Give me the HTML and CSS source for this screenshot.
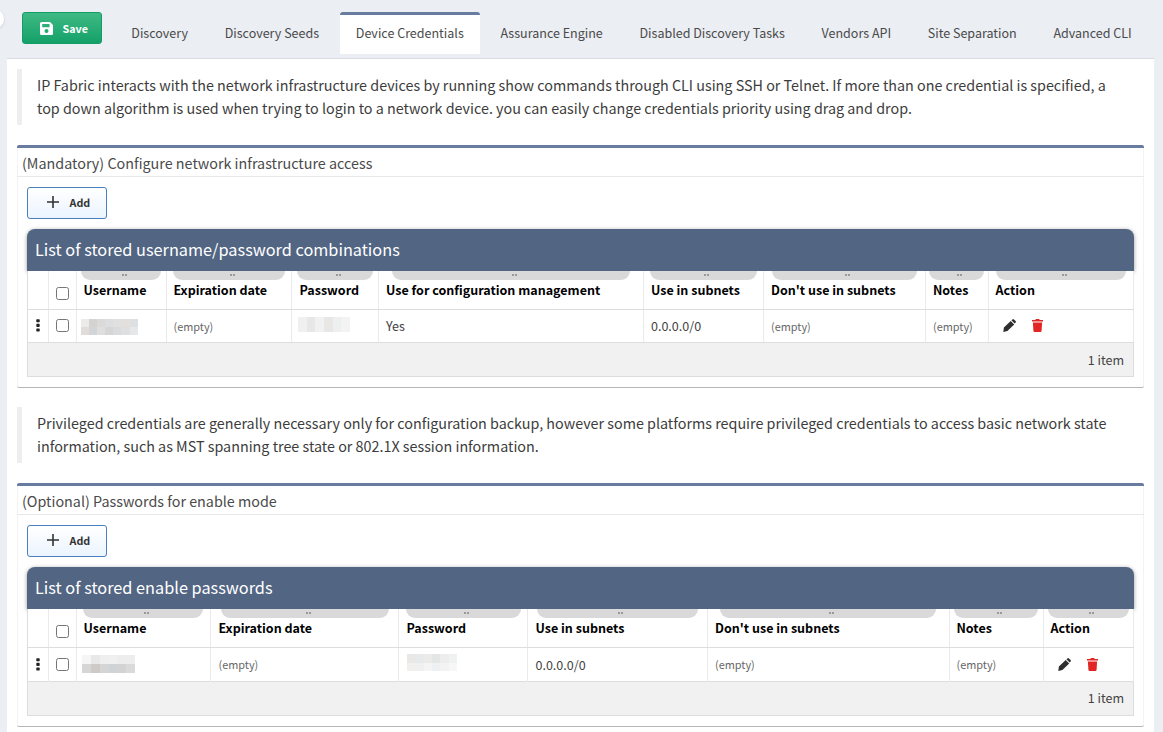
FILE: index.html
```
<!DOCTYPE html>
<html lang="en">
<head>
<meta charset="utf-8">
<title>Device Credentials</title>
<link rel="stylesheet" href="styles.css">
</head>
<body>
<svg class="defs" width="0" height="0">
  <symbol id="pencil" viewBox="0 0 13 13"><path d="M.9 8.600 7.700 1.900l3.500 3.500L4.400 12.100.3 12.900zM8.400 1.300 9.400.4q.8-.6 1.500 0l1.700 1.700q.6.7 0 1.500l-.9 1z"/></symbol>
  <symbol id="trash" viewBox="0 0 11 13"><path d="M0 1h3.200L4 .1h3l.8.9H11v1.600H0zM.9 3.400h9.200l-.5 8.300q-.1 1.200-1.200 1.200H2.600q-1.100 0-1.200-1.200z"/></symbol>
  <symbol id="grip" viewBox="0 0 4 13"><path d="M.8.2h2.400l.5.6v1.900l-.5.6H.8l-.5-.6V.8zM.8 4.800h2.400l.5.6v1.900l-.5.6H.8l-.5-.6V5.400zM.8 9.400h2.400l.5.6v1.900l-.5.6H.8l-.5-.6V10z"/></symbol>
  <symbol id="plus" viewBox="0 0 12 12"><path d="M5.200 0h1.600v5.200H12v1.600H6.800V12H5.200V6.800H0V5.200h5.200z"/></symbol>
</svg>
<div class="knob"></div>
<div class="page">
  <header class="toolbar">
    <button class="save"><svg width="13" height="13" viewBox="0 0 13 13"><path fill="#fff" fill-rule="evenodd" d="M1.500 0H10l3 3v8.500q0 1.500-1.500 1.500h-10Q0 13 0 11.500v-10Q0 0 1.500 0zM2.200 2v3.300h7.300V2zM6.500 7a2 2 0 1 0 0 4 2 2 0 0 0 0-4z"/></svg><span>Save</span></button>
    <nav class="tabs">
      <a class="tab">Discovery</a>
      <a class="tab">Discovery Seeds</a>
      <a class="tab active">Device Credentials</a>
      <a class="tab">Assurance Engine</a>
      <a class="tab">Disabled Discovery Tasks</a>
      <a class="tab">Vendors API</a>
      <a class="tab">Site Separation</a>
      <a class="tab">Advanced CLI</a>
    </nav>
  </header>
  <main class="content">
    <p class="note">IP Fabric interacts with the network infrastructure devices by running show commands through CLI using SSH or Telnet. If more than one credential is specified, a<br>top down algorithm is used when trying to login to a network device. you can easily change credentials priority using drag and drop.</p>
    <section class="card">
      <h2 class="card-title">(Mandatory) Configure network infrastructure access</h2>
      <button class="add"><svg width="12" height="12"><use href="#plus"/></svg><span>Add</span></button>
      <div class="list">
        <h3 class="list-title">List of stored username/password combinations</h3>
        <div class="row head access">
          <div></div>
          <div class="check"><input type="checkbox"></div>
          <div class="h1"><i></i><b>Username</b></div>
          <div class="h2"><i></i><b>Expiration date</b></div>
          <div class="h3"><i></i><b>Password</b></div>
          <div class="h4"><i></i><b>Use for configuration management</b></div>
          <div class="h5"><i></i><b>Use in subnets</b></div>
          <div class="h6"><i></i><b>Don't use in subnets</b></div>
          <div class="h7"><i></i><b>Notes</b></div>
          <div class="h8"><i></i><b>Action</b></div>
        </div>
        <div class="row data access">
          <div class="grip"><svg width="4" height="13"><use href="#grip"/></svg></div>
          <div class="check"><input type="checkbox"></div>
          <div class="h1"><svg class="mask mask-user" width="57" height="16" viewBox="0 0 57 16" shape-rendering="crispEdges"><path fill="#ecebea" d="M0 0h8v8H0z"/><path fill="#d5d3d2" d="M8 0h8v8H8z"/><path fill="#dbdad8" d="M16 0h8v8h-8z"/><path fill="#dcdee0" d="M24 0h8v8h-8z"/><path fill="#e0e0e0" d="M32 0h8v8h-8z"/><path fill="#e3dfdc" d="M40 0h9v8h-9z"/><path fill="#dde0e3" d="M49 0h8v8h-8z"/><path fill="#e1dcda" d="M0 8h8v8H0z"/><path fill="#d1d4d8" d="M8 8h8v8H8z"/><path fill="#dfdfdf" d="M16 8h8v8h-8z"/><path fill="#d6d6d6" d="M24 8h8v8h-8z"/><path fill="#dadbdb" d="M32 8h8v8h-8z"/><path fill="#dedfe0" d="M40 8h9v8h-9z"/><path fill="#e6e7e9" d="M49 8h8v8h-8z"/></svg></div>
          <div class="h2 empty">(empty)</div>
          <div class="h3"><svg class="mask mask-pass" width="52" height="15" viewBox="0 0 52 15" shape-rendering="crispEdges"><path fill="#f0f0f0" d="M0 0h9v15H0z"/><path fill="#e7e7e7" d="M9 0h8v15H9z"/><path fill="#f0f1f1" d="M17 0h9v15h-9z"/><path fill="#e8e7e6" d="M26 0h9v15h-9z"/><path fill="#eeeff1" d="M35 0h8v15h-8z"/><path fill="#f3f3f3" d="M43 0h9v15h-9z"/></svg></div>
          <div class="h4">Yes</div>
          <div class="h5">0.0.0.0/0</div>
          <div class="h6 empty">(empty)</div>
          <div class="h7 empty">(empty)</div>
          <div class="actions"><svg class="pencil" width="13" height="13"><use href="#pencil"/></svg><svg class="trash" width="11" height="13"><use href="#trash"/></svg></div>
        </div>
        <footer class="summary">1 item</footer>
      </div>
    </section>
    <p class="note">Privileged credentials are generally necessary only for configuration backup, however some platforms require privileged credentials to access basic network state<br>information, such as MST spanning tree state or 802.1X session information.</p>
    <section class="card card-last">
      <h2 class="card-title">(Optional) Passwords for enable mode</h2>
      <button class="add"><svg width="12" height="12"><use href="#plus"/></svg><span>Add</span></button>
      <div class="list">
        <h3 class="list-title">List of stored enable passwords</h3>
        <div class="row head enable">
          <div></div>
          <div class="check"><input type="checkbox"></div>
          <div class="h1"><i></i><b>Username</b></div>
          <div class="h2"><i></i><b>Expiration date</b></div>
          <div class="h3"><i></i><b>Password</b></div>
          <div class="h4"><i></i><b>Use in subnets</b></div>
          <div class="h5"><i></i><b>Don't use in subnets</b></div>
          <div class="h6"><i></i><b>Notes</b></div>
          <div class="h7"><i></i><b>Action</b></div>
        </div>
        <div class="row data enable">
          <div class="grip"><svg width="4" height="13"><use href="#grip"/></svg></div>
          <div class="check"><input type="checkbox"></div>
          <div class="h1"><svg class="mask mask-user" width="53" height="18" viewBox="0 0 53 18" shape-rendering="crispEdges"><path fill="#f5f5f5" d="M0 0h9v9H0z"/><path fill="#e8e8e8" d="M9 0h9v9H9z"/><path fill="#efefef" d="M18 0h9v9h-9z"/><path fill="#f0f0f0" d="M27 0h8v9h-8z"/><path fill="#ededed" d="M35 0h18v9H35z"/><path fill="#d6d6d6" d="M0 9h9v9H0z"/><path fill="#cecac7" d="M9 9h9v9H9z"/><path fill="#d5d5d5" d="M18 9h9v9h-9z"/><path fill="#cfd3d6" d="M27 9h8v9h-8z"/><path fill="#d3d3d3" d="M35 9h9v9h-9z"/><path fill="#dadada" d="M44 9h9v9h-9z"/></svg></div>
          <div class="h2 empty">(empty)</div>
          <div class="h3"><svg class="mask mask-pass" width="50" height="17" viewBox="0 0 50 17" shape-rendering="crispEdges"><path fill="#e9e8e7" d="M0 0h8v9H0z"/><path fill="#e7e9eb" d="M8 0h9v9H8z"/><path fill="#ebebea" d="M17 0h8v9h-8z"/><path fill="#e4e6e5" d="M25 0h8v9h-8z"/><path fill="#ededed" d="M33 0h9v9h-9z"/><path fill="#f0f1f1" d="M42 0h8v9h-8z"/><path fill="#f2f0ef" d="M0 9h8v8H0z"/><path fill="#f0f0f0" d="M8 9h9v8H8z"/><path fill="#f4f4f4" d="M17 9h8v8h-8z"/><path fill="#eef0f1" d="M25 9h8v8h-8z"/><path fill="#f3f3f3" d="M33 9h9v8h-9z"/><path fill="#f7f7f7" d="M42 9h8v8h-8z"/></svg></div>
          <div class="h4">0.0.0.0/0</div>
          <div class="h5 empty">(empty)</div>
          <div class="h6 empty">(empty)</div>
          <div class="actions"><svg class="pencil" width="13" height="13"><use href="#pencil"/></svg><svg class="trash" width="11" height="13"><use href="#trash"/></svg></div>
        </div>
        <footer class="summary">1 item</footer>
      </div>
    </section>
  </main>
</div>
</body>
</html>
```
FILE: styles.css
```
* { box-sizing: border-box; }
body {
  margin: 0;
  height: 732px;
  overflow: hidden;
  background: #ebeef3;
  color: #424242;
  font-family: "Noto Sans CJK SC", "Noto Sans", sans-serif;
  white-space: nowrap;
}
.defs { position: absolute; }
.knob {
  position: absolute;
  left: -16px;
  top: 9px;
  width: 20px;
  height: 20px;
  border-radius: 50%;
  background: #fff;
  box-shadow: 0 1px 3px #0002;
}
.page { margin: 0 9px 0 7px; }
.toolbar {
  display: flex;
  height: 59px;
  padding: 12px 0 0 15px;
  border-bottom: 1px solid #d9dcdf;
}
button { font-family: inherit; font-weight: 700; padding: 0; }
.save, .add {
  display: flex;
  align-items: center;
  flex: none;
  width: 80px;
  height: 32px;
  border-radius: 3px;
}
.add span { padding-bottom: 1px; }
.save {
  padding-left: 16.500px;
  gap: 10px;
  border: 1px solid #149c68;
  background: linear-gradient(#40b983, #14a169);
  color: #fff;
  font-size: 10.74px;
}
.tabs { display: flex; gap: 4.700px; margin-left: 13.300px; }
.tab {
  flex: none;
  height: 42px;
  padding: 0 16px;
  border-top: 3px solid transparent;
  border-radius: 3px 3px 0 0;
  color: #4a4a4a;
  font-size: 12.53px;
  line-height: 36px;
}
.tab.active { background: #fff; border-top-color: #687c9f; }
.content { height: 673px; padding: 10px 10px 0; background: #fff; }
.note {
  height: 56px;
  margin: 0 0 20px;
  padding: 4px 0 0 15px;
  border-left: 5px solid #eee;
  color: #3c3c3c;
  font-size: 14.33px;
  line-height: 23px;
}
.card {
  height: 243px;
  margin-bottom: 19px;
  border-top: 3px solid #687c9f;
  border-bottom: 1px solid #b5b7b7;
  border-radius: 2px;
  box-shadow: inset 1px 0 #f3f3f3, inset -1px 0 #f3f3f3;
}
.card-last { height: 244px; }
.card-title {
  height: 29px;
  margin: 0 0 10px;
  padding-left: 5px;
  border-bottom: 1px solid #e8e8e8;
  color: #4a4a4a;
  font-size: 14.33px;
  font-weight: 400;
  line-height: 30px;
}
.add {
  margin-left: 10px;
  padding-left: 19px;
  gap: 10.500px;
  border: 1px solid #4a80bd;
  background: linear-gradient(#fff, #ebf4fe);
  color: #333;
  font-size: 10.74px;
}
.add svg { fill: #333; margin-bottom: 2px; }
.list { margin: 10px 10px 0; }
.list-title {
  height: 42px;
  margin: 0;
  padding-left: 8px;
  border-radius: 8px 8px 0 0;
  background: #526583;
  box-shadow: 0 1px 4px #0006;
  color: #fff;
  font-size: 16.3px;
  font-weight: 400;
  line-height: 41px;
}
.row {
  position: relative;
  display: grid;
  border-left: 1px solid #ddd;
  border-bottom: 1px solid #ddd;
  background: #fff;
}
.row > div { border-right: 1px solid #eaeaea; }
.access { grid-template-columns: 21px 28px 90px 125px 87px 265px 120px 162px 63px 145px; }
.enable { grid-template-columns: 21px 28px 134px 188px 129px 180px 242px 94px 90px; }
.head { height: 39px; color: #000; font-size: 12.53px; }
.head b { display: block; padding-left: var(--text); line-height: 20px; }
.head i {
  display: flex;
  justify-content: center;
  gap: 1px;
  height: 9px;
  margin: 0 var(--right) 0 var(--left);
  padding: 3px 0 0 6px;
  border-radius: 0 0 9px 9px;
  background: #d9d9d9;
}
.head i::before, .head i::after { content: ""; width: 2px; height: 2px; background: #999; }
.data { height: 33px; font-size: 12.53px; line-height: 32px; }
.data.enable { height: 34px; line-height: 34px; }
.data > div { padding-left: var(--text); }
.data .empty { color: #666; font-size: 10.9px; }
.data.enable .empty { line-height: 32px; }
.check input { display: block; width: 13px; height: 13px; margin: 16px 0 0 7px; }
.data .check input { margin-top: 9px; }
.data.enable .check input { margin-top: 10px; }
.grip { padding-top: 9px; line-height: 0; }
.data .grip { padding-left: 8px; }
.enable .grip { padding-top: 10px; }
.grip svg { fill: #222; }
.mask { display: block; }
.data > .h1, .data > .h3 { padding-left: 4px; }
.access .mask-user { margin-top: 9px; }
.access .mask-pass { margin: 7px 0 0 2px; }
.enable .mask-user { margin: 7px 0 0 1px; }
.enable .mask-pass { margin: 6px 0 0 4px; }
.actions { display: flex; gap: 16px; padding-top: 9px; }
.data .actions { padding-left: 14px; }
.enable .actions { padding-top: 10px; }
.pencil { fill: #2e2e2e; }
.trash { fill: #e12525; }
.access .h1 { --left: 4px; --right: 5px; --text: 6.500px; }
.access .h2 { --left: 6px; --right: 6px; --text: 6.500px; }
.access .h3 { --left: 5px; --right: 5px; --text: 7.500px; }
.access .h4 { --left: 13px; --right: 13px; --text: 7px; }
.access .h5 { --left: 6px; --right: 6px; --text: 7px; }
.access .h6 { --left: 8px; --right: 8px; --text: 7px; }
.access .h7 { --left: 3px; --right: 4px; --text: 7px; }
.access .h8 { --left: 7px; --right: 7px; --text: 6.500px; }
.enable .h1 { --left: 6px; --right: 7px; --text: 6.500px; }
.enable .h2 { --left: 10px; --right: 9px; --text: 7.500px; }
.enable .h3 { --left: 7px; --right: 6px; --text: 7.500px; }
.enable .h4 { --left: 9px; --right: 9px; --text: 7.500px; }
.enable .h5 { --left: 12px; --right: 13px; --text: 7px; }
.enable .h6 { --left: 4px; --right: 5px; --text: 6.500px; }
.enable .h7 { --left: 4px; --right: 4px; --text: 6.500px; }
.summary {
  height: 34px;
  padding-right: 9px;
  border: 1px solid #ddd;
  border-top: 0;
  background: #f1f1f1;
  font-size: 12.53px;
  line-height: 34px;
  text-align: right;
}
.card-last .summary { line-height: 32px; }
```
